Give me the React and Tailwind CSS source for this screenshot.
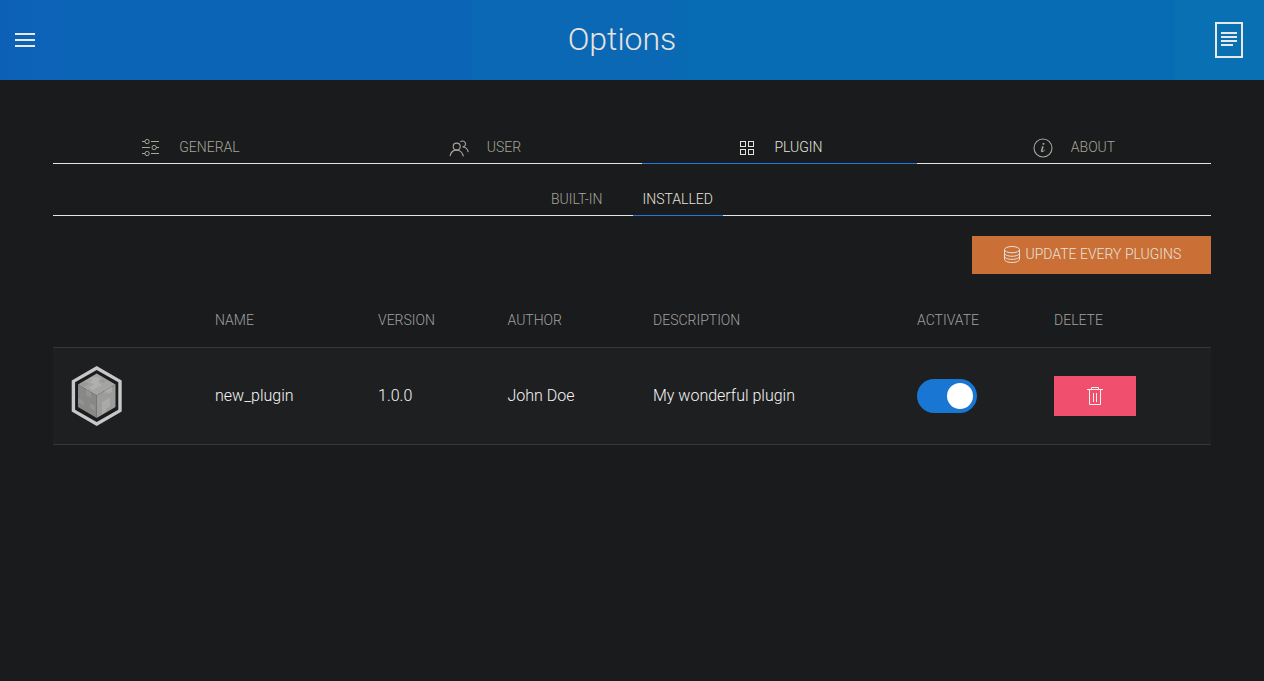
const Icon = ({ children, className = "" }) => (
  <svg
    width="20"
    height="20"
    viewBox="0 0 20 20"
    fill="none"
    stroke="currentColor"
    className={`shrink-0 ${className}`}
  >
    {children}
  </svg>
);

const SettingsIcon = () => (
  <Icon>
    <ellipse cx="6.11" cy="3.55" rx="2.11" ry="2.15" />
    <ellipse cx="6.11" cy="15.55" rx="2.11" ry="2.15" />
    <circle cx="13.15" cy="9.55" r="2.15" />
    <g fill="currentColor" stroke="none">
      <rect x="1" y="3" width="3" height="1" />
      <rect x="10" y="3" width="8" height="1" />
      <rect x="1" y="9" width="8" height="1" />
      <rect x="15" y="9" width="3" height="1" />
      <rect x="1" y="15" width="3" height="1" />
      <rect x="10" y="15" width="8" height="1" />
    </g>
  </Icon>
);

const UsersIcon = () => (
  <Icon>
    <g strokeWidth="1.1">
      <circle cx="7.7" cy="8.6" r="3.5" />
      <path d="M1,18.1 C1.7,14.6 4.4,12.1 7.6,12.1 C10.9,12.1 13.7,14.8 14.3,18.3" />
      <path d="M11.4,4 C12.8,2.4 15.4,2.8 16.3,4.7 C17.2,6.6 15.7,8.9 13.6,8.9 C16.5,8.9 18.8,11.3 19.2,14.1" />
    </g>
  </Icon>
);

const GridIcon = () => (
  <Icon>
    <rect x="3.5" y="3.5" width="5" height="5" />
    <rect x="11.5" y="3.5" width="5" height="5" />
    <rect x="11.5" y="11.5" width="5" height="5" />
    <rect x="3.5" y="11.5" width="5" height="5" />
  </Icon>
);

const InfoIcon = () => (
  <Icon>
    <path
      fill="currentColor"
      stroke="none"
      d="M12.13,11.59 C11.97,12.84 10.35,14.12 9.1,14.16 C6.17,14.2 9.89,9.46 8.74,8.37 C9.3,8.16 10.62,7.83 10.62,8.81 C10.62,9.63 10.12,10.55 9.88,11.32 C8.66,15.16 12.13,11.15 12.14,11.18 C12.16,11.21 12.16,11.35 12.13,11.59 Z M11.56,5.67 C11.56,6.67 9.36,7.15 9.36,6.03 C9.36,5 11.56,4.54 11.56,5.67 Z"
    />
    <circle cx="10" cy="10" r="9" strokeWidth="1.1" />
  </Icon>
);

const DatabaseIcon = () => (
  <Icon>
    <ellipse cx="10" cy="4.64" rx="7.5" ry="3.14" />
    <path d="M17.5,8.11 C17.5,9.85 14.14,11.25 10,11.25 C5.86,11.25 2.5,9.84 2.5,8.11" />
    <path d="M17.5,11.25 C17.5,12.99 14.14,14.39 10,14.39 C5.86,14.39 2.5,12.98 2.5,11.25" />
    <path d="M17.49,4.64 L17.5,14.36 C17.5,16.1 14.14,17.5 10,17.5 C5.86,17.5 2.5,16.09 2.5,14.36 L2.5,4.64" />
  </Icon>
);

const TrashIcon = () => (
  <Icon>
    <polyline points="6.5 3 6.5 1.5 13.5 1.5 13.5 3" />
    <polyline points="4.5 4 4.5 18.5 15.5 18.5 15.5 4" />
    <g fill="currentColor" stroke="none">
      <rect x="8" y="7" width="1" height="9" />
      <rect x="11" y="7" width="1" height="9" />
      <rect x="2" y="3" width="16" height="1" />
    </g>
  </Icon>
);

const BlockLogo = () => (
  <svg width="52" height="60" viewBox="0 0 52 60">
    <path d="M25.7 2 L49 15.4 V44.6 L25.7 58 L2.4 44.6 V15.4 Z" fill="#1b1c1d" stroke="#c8c8c8" strokeWidth="3.4" />
    <path d="M25.7 7.5 L44.5 18.5 L25.7 29.5 L7 18.5 Z" fill="#a4a4a3" />
    <path d="M7 18.5 L25.7 29.5 V52 L7 41 Z" fill="#888886" />
    <path d="M44.5 18.5 L25.7 29.5 V52 L44.5 41 Z" fill="#9c9c9a" />
    <path d="M18 12 l4 2 -3 2 4 2.5 -5 3 4 2.5 5 -3 4 -2 -4 -3 4 -2 -5 -3 z" fill="#b0b0af" />
    <path d="M9 18.5 l5 -3 4 2.5 -5 3 z M31 13 l4 2 -3 2 -4 -2z" fill="#999998" />
    <path d="M15 23.2 l5 3 v6 l-5 -3 z M7 32 l6 3.5 v4 l-6 -3.5z M19 37 l5 3 v5 l-5 -3z" fill="#939392" />
    <path d="M34 24.7 l7 -4 v5 l-4 2.4 v-2 l-3 1.6 z M31 36 l8 -4.6 v9 l-4 2.4 v3 l-4 2.4 z" fill="#abaaaa" />
  </svg>
);

const tabs = [
  { label: "GENERAL", icon: SettingsIcon, width: "w-[275px]" },
  { label: "USER", icon: UsersIcon, width: "w-[314px]" },
  { label: "PLUGIN", icon: GridIcon, width: "w-[275px] pl-px", gap: "gap-[17px]", active: true },
  { label: "ABOUT", icon: InfoIcon, width: "w-[294px] pl-5" },
];

const columns = "grid grid-cols-[162px_163px_129.5px_145.5px_264px_137px_157px] items-center";

export default function App() {
  return (
    <div className="h-[681px] bg-[#1a1b1c] font-['Roboto',sans-serif] font-light text-[#e6e3de]">
      <header className="grid h-20 grid-cols-[1fr_auto_1fr] items-center bg-[linear-gradient(90deg,#0c61b7_0px,#0b64b6_96px,#0b64b6_470px,#0b68b5_472px,#0b68b5_660px,#076cb3_700px,#076cb3_1174px,#0970b3_1176px)] pr-[21px] pl-[15px]">
        <svg width="20" height="20" viewBox="0 0 20 20" fill="#e8e8e6">
          <rect y="3" width="20" height="2" />
          <rect y="9" width="20" height="2" />
          <rect y="15" width="20" height="2" />
        </svg>
        <h1 className="mr-[14px] -mt-0.5 text-[32px] leading-10">Options</h1>
        <svg width="28" height="36" viewBox="0 0 28 36" fill="#e8e8e6" className="justify-self-end">
          <rect x="1" y="1" width="26" height="34" fill="none" stroke="#e8e8e6" strokeWidth="2" />
          <rect x="6" y="10" width="16" height="2" />
          <rect x="6" y="14" width="16" height="2" />
          <rect x="6" y="18" width="16" height="2" />
          <rect x="6" y="22" width="12" height="2" />
        </svg>
      </header>

      <main className="px-[53px] pt-[52px]">
        <nav className="flex h-8 text-sm">
          {tabs.map(({ label, icon: TabIcon, width, gap = "gap-[18px]", active }) => (
            <a
              key={label}
              className={`flex items-start justify-center border-b pt-1.5 ${gap} ${width} ${
                active ? "border-[#1e7bdc] text-[#e6e3de]" : "border-[#e5e5e5] text-[#a8a599]"
              }`}
            >
              <TabIcon />
              <span className="-mt-px leading-5">{label}</span>
            </a>
          ))}
        </nav>

        <nav className="mt-5 flex h-8 text-sm leading-5">
          <span className="w-[488px] border-b border-[#e5e5e5]" />
          <a className="w-[92px] border-b border-[#e5e5e5] pt-[5px] pl-[10px] text-[#a8a599]">BUILT-IN</a>
          <a className="w-[90px] border-b border-[#1e7bdc] pt-[5px] pl-[9.5px]">INSTALLED</a>
          <span className="flex-1 border-b border-[#e5e5e5]" />
        </nav>

        <div className="mt-5 flex justify-end">
          <button className="flex h-[38px] w-[239px] items-center bg-[#ca6f35] pl-[30px] text-sm">
            <DatabaseIcon />
            <span className="-mt-0.5 ml-[3.5px]">UPDATE EVERY PLUGINS</span>
          </button>
        </div>

        <section className="mt-[26px]">
          <div className={`${columns} h-[47px] pb-[7px] text-sm text-[#a0a0a0]`}>
            <span />
            <span>NAME</span>
            <span>VERSION</span>
            <span>AUTHOR</span>
            <span>DESCRIPTION</span>
            <span>ACTIVATE</span>
            <span>DELETE</span>
          </div>
          <div className={`${columns} h-[98px] border-y border-[#353738] bg-[#1e1f20] text-base text-[#f5f5f5]`}>
            <span className="pl-[18px]">
              <BlockLogo />
            </span>
            <span>new_plugin</span>
            <span>1.0.0</span>
            <span>John Doe</span>
            <span>My wonderful plugin</span>
            <button className="flex h-[34px] w-[60px] items-center justify-end rounded-full bg-[#1976d2] pr-1">
              <span className="size-[26px] rounded-full bg-white" />
            </button>
            <button className="flex h-10 w-[82px] items-center justify-center bg-[#f0506e]">
              <TrashIcon />
            </button>
          </div>
        </section>
      </main>
    </div>
  );
}
